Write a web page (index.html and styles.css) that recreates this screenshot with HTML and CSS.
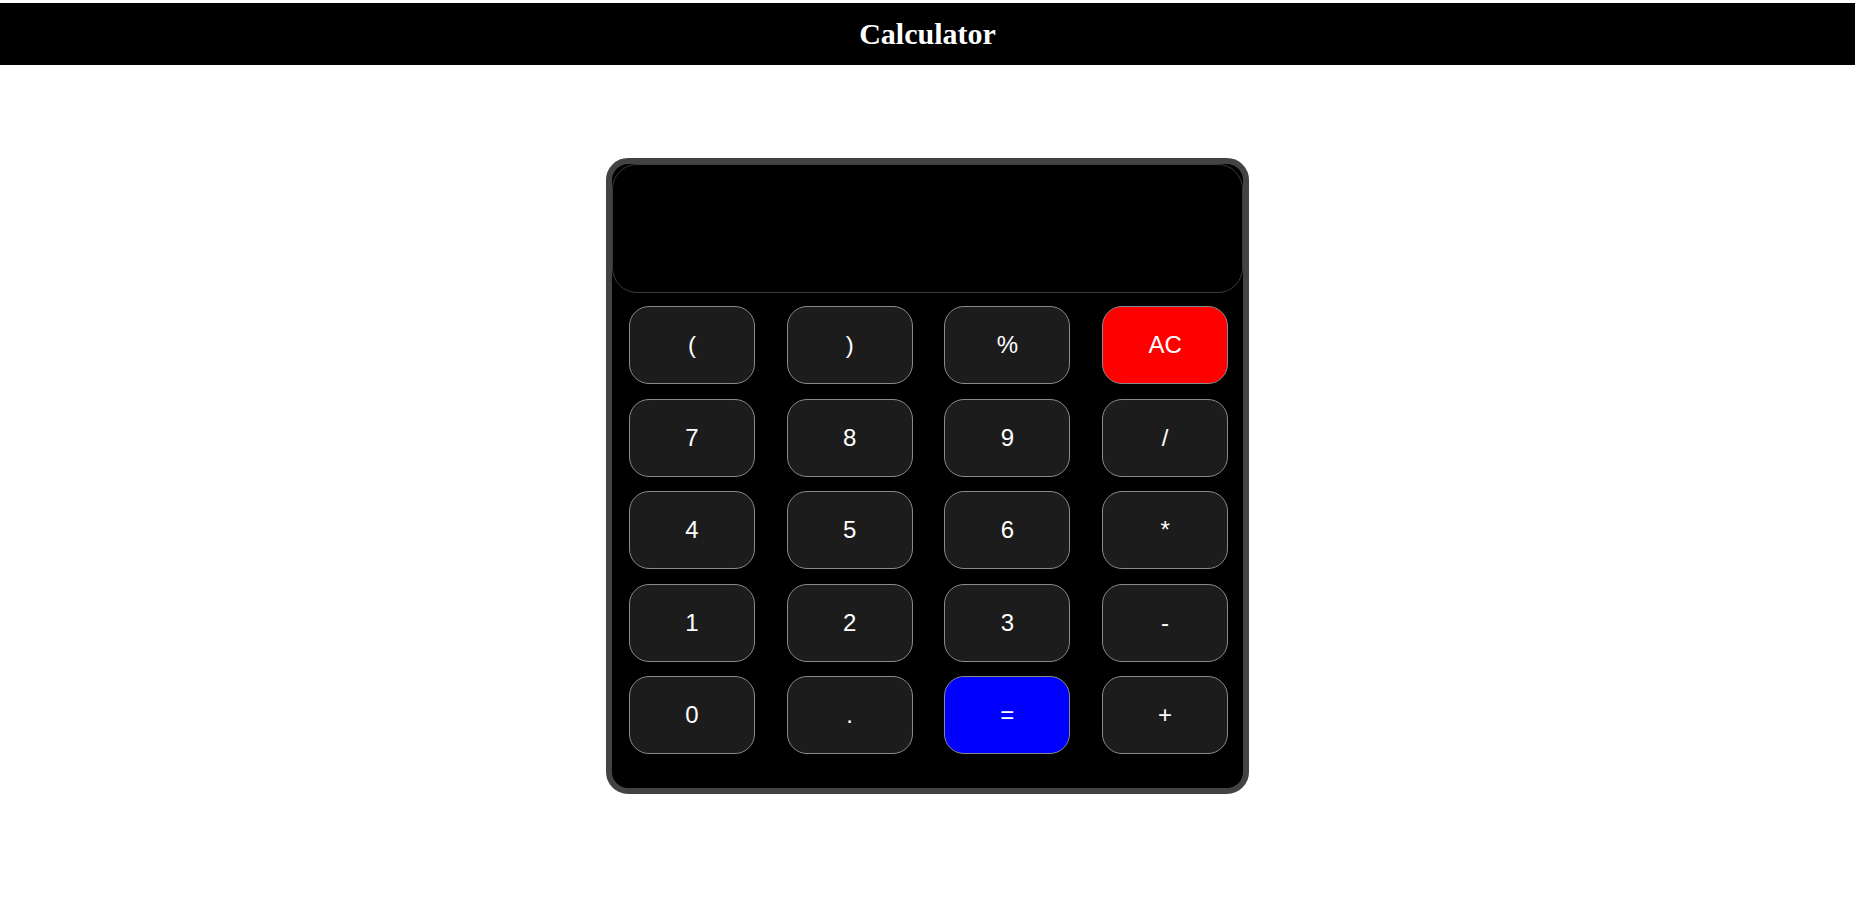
FILE: index.html
```html
<!DOCTYPE html>
<html lang="en">
<head>
<meta charset="utf-8">
<title>Calculator</title>
<link rel="stylesheet" href="styles.css">
</head>
<body>
<header class="topbar"><h1 class="title">Calculator</h1></header>
<main class="page">
  <div class="calc">
    <div class="display"></div>
    <div class="keys">
      <button class="key">(</button>
      <button class="key">)</button>
      <button class="key">%</button>
      <button class="key key-clear">AC</button>
      <button class="key">7</button>
      <button class="key">8</button>
      <button class="key">9</button>
      <button class="key">/</button>
      <button class="key">4</button>
      <button class="key">5</button>
      <button class="key">6</button>
      <button class="key">*</button>
      <button class="key">1</button>
      <button class="key">2</button>
      <button class="key">3</button>
      <button class="key">-</button>
      <button class="key">0</button>
      <button class="key">.</button>
      <button class="key key-equals">=</button>
      <button class="key">+</button>
    </div>
  </div>
</main>
</body>
</html>
```
FILE: styles.css
```css
html, body {
  margin: 0;
  padding: 0;
  background: #ffffff;
}

.topbar {
  margin-top: 3px;
  height: 62px;
  background: #000000;
  display: flex;
  align-items: center;
  justify-content: center;
}

.title {
  margin: 0;
  color: #ffffff;
  font-family: "Liberation Serif", "Times New Roman", serif;
  font-weight: bold;
  font-size: 30px;
  line-height: 62px;
}

.page {
  display: flex;
  justify-content: center;
  padding-top: 93px;
}

.calc {
  box-sizing: border-box;
  width: 643px;
  height: 636px;
  background: #000000;
  border: 6px solid #434343;
  border-radius: 22px;
  display: flex;
  flex-direction: column;
}

.display {
  box-sizing: border-box;
  height: 129px;
  border: 1px solid #3a3a3a;
  border-radius: 25px;
  background: #000000;
}

.keys {
  display: grid;
  grid-template-columns: repeat(4, 126px);
  grid-auto-rows: 78px;
  column-gap: 31.7px;
  row-gap: 14.5px;
  padding: 13px 15px 0 17px;
}

.key {
  box-sizing: border-box;
  margin: 0;
  padding: 0;
  border: 1px solid #8a8a8a;
  border-radius: 20px;
  background: #1c1c1c;
  color: #ffffff;
  font-family: "Liberation Sans", Arial, sans-serif;
  font-size: 24px;
}

.key-clear {
  background: #ff0000;
}

.key-equals {
  background: #0000ff;
}
```
